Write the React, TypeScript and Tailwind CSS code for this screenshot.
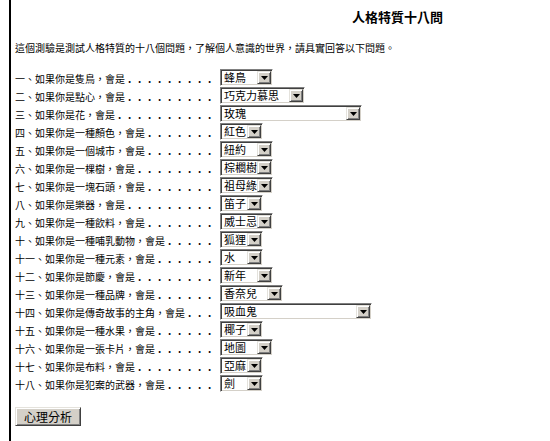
import React from 'react';

const questions: [string, string, string][] = [
  ['一、如果你是隻鳥，會是', '蜂鳥', 'w-[53px]'],
  ['二、如果你是點心，會是', '巧克力慕思', 'w-[85px]'],
  ['三、如果你是花，會是', '玫瑰', 'w-[142px]'],
  ['四、如果你是一種顏色，會是', '紅色', 'w-[43px]'],
  ['五、如果你是一個城市，會是', '紐約', 'w-[53px]'],
  ['六、如果你是一棵樹，會是', '棕櫚樹', 'w-[53px]'],
  ['七、如果你是一塊石頭，會是', '祖母綠', 'w-[53px]'],
  ['八、如果你是樂器，會是', '笛子', 'w-[43px]'],
  ['九、如果你是一種飲料，會是', '威士忌', 'w-[53px]'],
  ['十、如果你是一種哺乳動物，會是', '狐狸', 'w-[43px]'],
  ['十一、如果你是一種元素，會是', '水', 'w-[43px]'],
  ['十二、如果你是節慶，會是', '新年', 'w-[53px]'],
  ['十三、如果你是一種品牌，會是', '香奈兒', 'w-[63px]'],
  ['十四、如果你是傳奇故事的主角，會是', '吸血鬼', 'w-[152px]'],
  ['十五、如果你是一種水果，會是', '椰子', 'w-[43px]'],
  ['十六、如果你是一張卡片，會是', '地圖', 'w-[53px]'],
  ['十七、如果你是布料，會是', '亞麻', 'w-[43px]'],
  ['十八、如果你是犯案的武器，會是', '劍', 'w-[43px]'],
];

function Select({ value, width }: { value: string; width: string }) {
  return (
    <div
      className={`${width} flex h-[17px] border border-t-[#808080] border-l-[#808080] border-r-white border-b-white bg-white p-[1px] shadow-[inset_1px_1px_0_#404040,inset_-1px_-1px_0_#d4d0c8]`}
    >
      <div className="flex-1 whitespace-nowrap pl-[2px] text-[11px] leading-[13px]">{value}</div>
      <div className="flex w-[14px] shrink-0 items-center justify-center border border-t-[#e4e2dc] border-l-[#e4e2dc] border-r-[#404040] border-b-[#404040] bg-[#d4d0c8] shadow-[inset_1px_1px_0_#fff,inset_-1px_-1px_0_#808080]">
        <svg width="7" height="4" viewBox="0 0 7 4">
          <polygon points="0,0 7,0 3.5,4" fill="#000" />
        </svg>
      </div>
    </div>
  );
}

export default function App() {
  return (
    <div className="min-h-[441px] bg-white text-black font-['Noto_Sans_CJK_TC','Noto_Sans_CJK_SC',sans-serif]">
      <div className="ml-[9px] min-h-[441px] border-l-2 border-black pl-[4px]">
        <h1 className="pl-[337px] pt-[9px] text-[13px] font-bold leading-[16px]">人格特質十八問</h1>
        <p className="mt-[16px] text-[10px] leading-[14px]">
          這個測驗是測試人格特質的十八個問題，了解個人意識的世界，請具實回答以下問題。
        </p>
        <div className="mt-[14px] flex flex-col">
          {questions.map(([label, answer, width]) => (
            <div key={label} className="flex h-[18px] items-start">
              <div className="flex w-[205px] whitespace-nowrap pt-[4px] text-[10px] leading-[12px]">
                <span>{label}</span>
                {Array.from({ length: Math.max(0, 20 - label.length) }).map((_, i) => (
                  <span key={i} className="inline-block w-[10px] pl-[3px] font-bold">
                    .
                  </span>
                ))}
              </div>
              <Select value={answer} width={width} />
            </div>
          ))}
        </div>
        <button className="mt-[14px] h-[19px] w-[66px] border border-t-[#e4e2dc] border-l-[#e4e2dc] border-r-[#404040] border-b-[#404040] bg-[#d4d0c8] text-[12px] leading-[15px] shadow-[inset_1px_1px_0_#fff,inset_-1px_-1px_0_#808080]">
          心理分析
        </button>
      </div>
    </div>
  );
}
